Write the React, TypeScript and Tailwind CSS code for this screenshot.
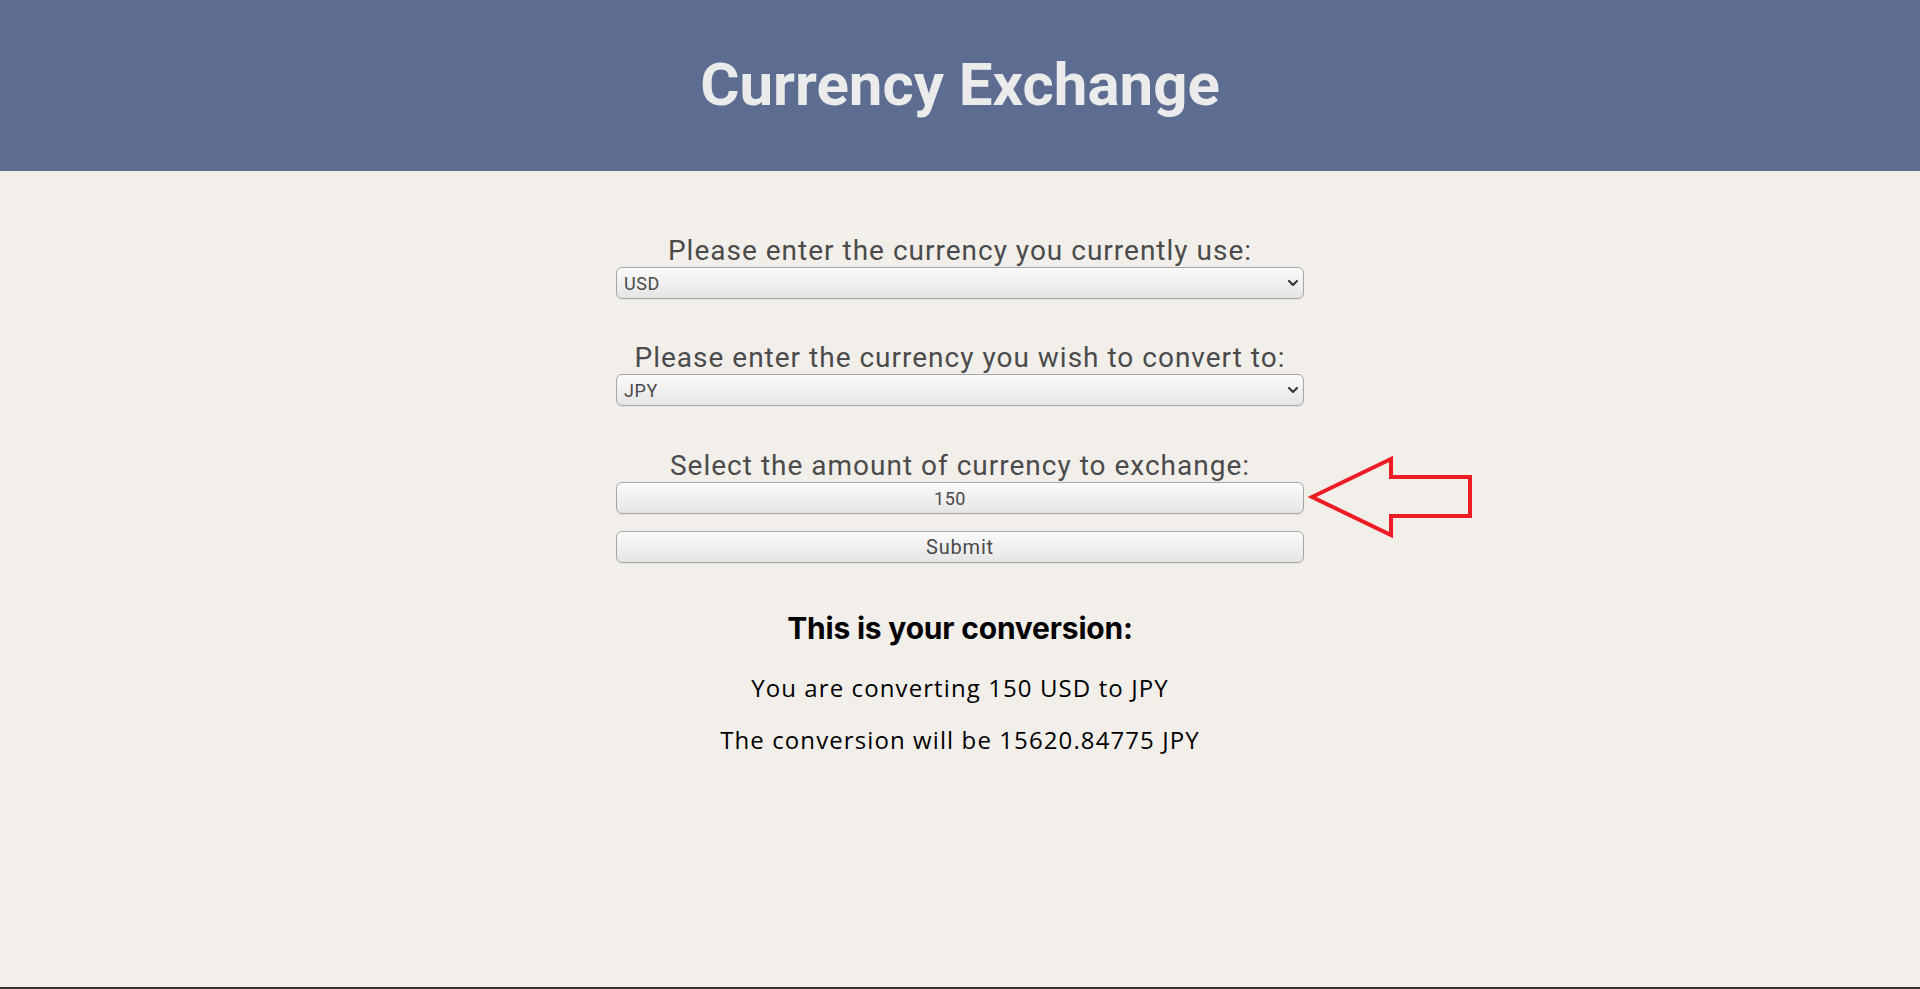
import { useState } from 'react';

const fieldClass =
  "w-full h-[32px] rounded-[6px] border border-[#a6a6a6] bg-gradient-to-b from-[#fbfbfb] to-[#e5e5e5] text-[#4a4a4a] shadow-[0_1px_0_rgba(0,0,0,0.04)] outline-none";

function CurrencySelect({ value, onChange }: { value: string; onChange: (v: string) => void }) {
  return (
    <div className="relative w-full">
      <select
        value={value}
        onChange={(e) => onChange(e.target.value)}
        className={fieldClass + " appearance-none pl-[7px] pr-8 text-[18px] tracking-[0.6px]"}
      >
        {['USD', 'EUR', 'GBP', 'JPY', 'CAD', 'AUD'].map((c) => (
          <option key={c} value={c}>{c}</option>
        ))}
      </select>
      <svg
        className="pointer-events-none absolute right-[6px] top-[13px] w-[10px] h-[6px]"
        viewBox="0 0 10 6"
        fill="none"
      >
        <path d="M1 1l4 4 4-4" stroke="#333" strokeWidth="2" strokeLinecap="round" strokeLinejoin="round" />
      </svg>
    </div>
  );
}

export default function App() {
  const [from, setFrom] = useState('USD');
  const [to, setTo] = useState('JPY');
  const [amount, setAmount] = useState('150');

  const labelClass = "text-[28px] leading-[30px] tracking-[1px] text-[#4b4b4b] mb-[1px]";
  const resultClass = "text-[24px] leading-[30px] tracking-[1.1px] text-black font-['Open_Sans',sans-serif]";

  return (
    <div className="min-h-[989px] flex flex-col bg-[#f2efea] font-['Roboto',sans-serif]">
      <header className="h-[171px] bg-[#5c6d91] flex items-center justify-center">
        <h1 className="text-[60px] font-bold text-[#ebebeb] leading-none pb-[2px]">Currency Exchange</h1>
      </header>

      <main className="flex-1 flex flex-col items-center pt-[65px]">
        <div className="w-[688px] flex flex-col items-center">
          <label className={labelClass}>Please enter the currency you currently use:</label>
          <CurrencySelect value={from} onChange={setFrom} />

          <label className={labelClass + " mt-[44px]"}>Please enter the currency you wish to convert to:</label>
          <CurrencySelect value={to} onChange={setTo} />

          <label className={labelClass + " mt-[45px]"}>Select the amount of currency to exchange:</label>
          <input
            value={amount}
            onChange={(e) => setAmount(e.target.value)}
            className={fieldClass + " h-[31px] text-center pr-[20px] text-[18px] tracking-[0.6px]"}
          />
          <button className={fieldClass + " h-[31px] mt-[17px] text-[20px] tracking-[0.8px]"}>Submit</button>

          <h3 className="mt-[47px] text-[30px] font-bold text-black leading-[36px] font-['Inter',sans-serif] tracking-[-0.2px]">This is your conversion:</h3>
          <p className={resultClass + " mt-[27px]"}>You are converting 150 USD to JPY</p>
          <p className={resultClass + " mt-[22px]"}>The conversion will be 15620.84775 JPY</p>
        </div>
      </main>

      <div className="h-[2px] bg-[#333]" />

      <svg className="absolute left-[1308px] top-[456px] w-[166px] h-[84px]" viewBox="1308 456 166 84" fill="none">
        <path
          d="M1312 497 L1391 459 L1391 477 L1470 477 L1470 516 L1391 516 L1391 535 Z"
          stroke="#ed1c24"
          strokeWidth="4"
          strokeLinejoin="miter"
        />
      </svg>
    </div>
  );
}
